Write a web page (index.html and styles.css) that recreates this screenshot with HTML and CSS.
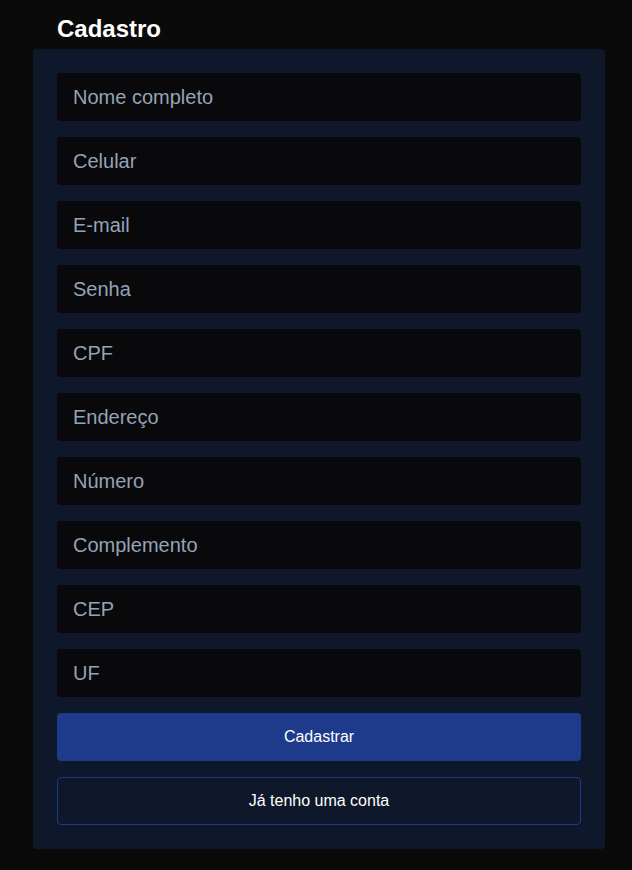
FILE: index.html
```html
<!DOCTYPE html>
<html lang="pt-BR">
<head>
<meta charset="utf-8">
<title>Cadastro</title>
<link rel="stylesheet" href="styles.css">
</head>
<body>
<main class="page">
  <h1 class="title">Cadastro</h1>
  <form class="card">
    <input class="field" type="text" placeholder="Nome completo">
    <input class="field" type="text" placeholder="Celular">
    <input class="field" type="text" placeholder="E-mail">
    <input class="field" type="password" placeholder="Senha">
    <input class="field" type="text" placeholder="CPF">
    <input class="field" type="text" placeholder="Endereço">
    <input class="field" type="text" placeholder="Número">
    <input class="field" type="text" placeholder="Complemento">
    <input class="field" type="text" placeholder="CEP">
    <input class="field" type="text" placeholder="UF">
    <button class="btn btn-primary" type="button">Cadastrar</button>
    <button class="btn btn-outline" type="button">Já tenho uma conta</button>
  </form>
</main>
</body>
</html>
```
FILE: styles.css
```css
html, body {
  margin: 0;
  padding: 0;
  background: #0a0a0a;
  font-family: "Liberation Sans", Arial, sans-serif;
}
.page {
  width: 572px;
  padding: 13px 0 0 33px;
}
.title {
  margin: 0 0 4px 24px;
  font-size: 24px;
  line-height: 32px;
  font-weight: 700;
  color: #ffffff;
}
.card {
  background: #0f172a;
  border-radius: 4px;
  padding: 24px;
  display: flex;
  flex-direction: column;
  gap: 16px;
}
.field {
  box-sizing: border-box;
  height: 48px;
  width: 100%;
  margin: 0;
  padding: 0 16px;
  border: none;
  border-radius: 4px;
  background: #09090b;
  color: #e2e8f0;
  font-family: inherit;
  font-size: 20px;
  outline: none;
}
.field::placeholder {
  color: #94a3b8;
  opacity: 1;
}
.btn {
  box-sizing: border-box;
  height: 48px;
  width: 100%;
  margin: 0;
  border-radius: 4px;
  font-family: inherit;
  font-size: 16px;
  color: #ffffff;
  cursor: pointer;
}
.btn-primary {
  background: #1e3a8a;
  border: none;
}
.btn-outline {
  background: #0f172a;
  border: 1px solid #1e3a8a;
}
```
